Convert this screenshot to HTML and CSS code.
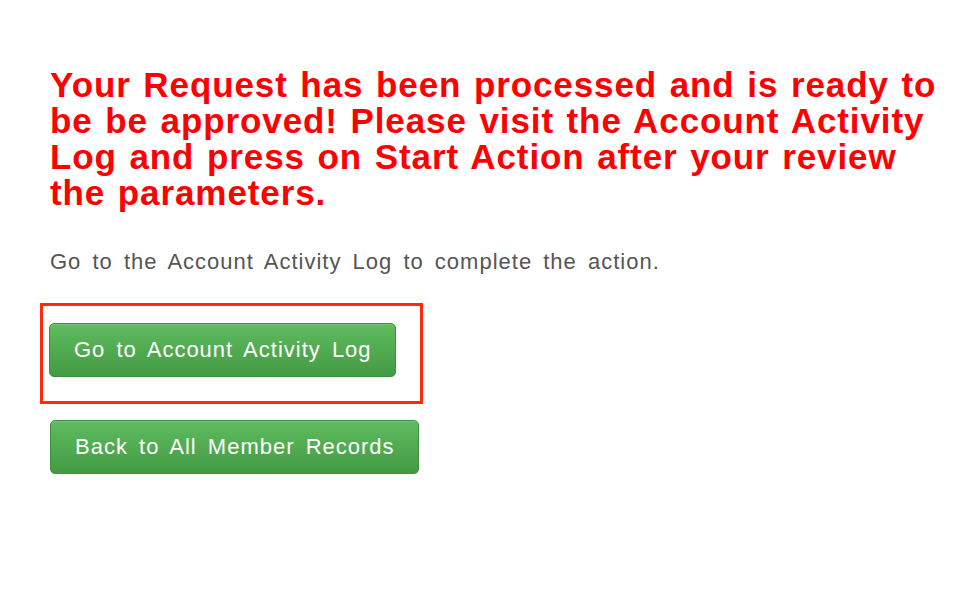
FILE: index.html
```html
<!DOCTYPE html>
<html>
<head>
<meta charset="utf-8">
<link rel="stylesheet" href="styles.css">
</head>
<body>
<main class="page">
  <h1 class="notice">Your Request has been processed and is ready to be be approved! Please visit the Account Activity Log and press on Start Action after your review the parameters.</h1>
  <p class="hint">Go to the Account Activity Log to complete the action.</p>
  <div class="highlight">
    <a class="btn" href="#">Go to Account Activity Log</a>
  </div>
  <div class="actions">
    <a class="btn" href="#">Back to All Member Records</a>
  </div>
</main>
</body>
</html>
```
FILE: styles.css
```css
html, body {
  margin: 0;
  padding: 0;
  background: #ffffff;
}
.page {
  padding: 67px 0 0 50px;
  width: 900px;
  font-family: "Liberation Sans", Arial, sans-serif;
}
.notice {
  margin: 0;
  color: #ff0000;
  font-size: 35px;
  line-height: 36px;
  font-weight: bold;
  letter-spacing: 0.9px;
  word-spacing: 2px;
}
.hint {
  margin: 39px 0 0 0;
  color: #555555;
  font-size: 22px;
  line-height: 24px;
  letter-spacing: 1px;
  word-spacing: 4px;
}
.highlight {
  margin: 29px 0 0 -10px;
  width: 383px;
  height: 101px;
  border: 3px solid #ff2a10;
  padding: 17px 0 0 6px;
  box-sizing: border-box;
}
.actions {
  margin-top: 16px;
}
.btn {
  display: inline-block;
  box-sizing: border-box;
  height: 54px;
  line-height: 52px;
  padding: 0 23px 0 24px;
  color: #ffffff;
  font-size: 22px;
  letter-spacing: 1px;
  word-spacing: 4px;
  text-decoration: none;
  border: 1px solid #3e8f3e;
  border-radius: 5px;
  background: linear-gradient(to bottom, #5fbc5f 0%, #439a43 100%);
  box-shadow: inset 0 1px 0 rgba(255,255,255,0.15), 0 1px 1px rgba(0,0,0,0.08);
}
```
